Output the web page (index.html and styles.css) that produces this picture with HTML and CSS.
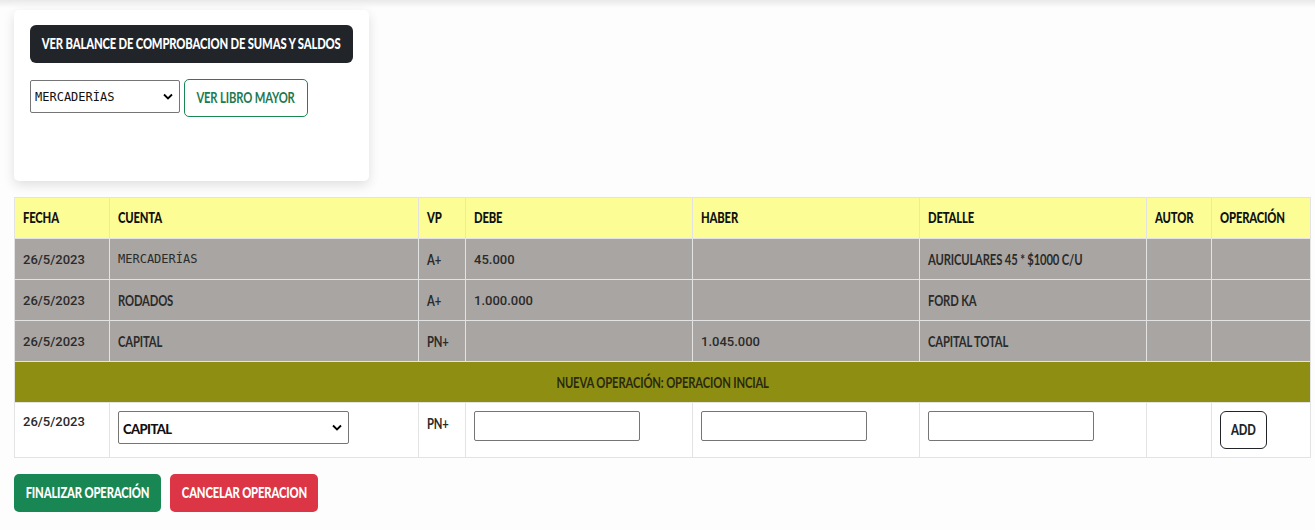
FILE: index.html
```html
<!DOCTYPE html>
<html lang="es">
<head>
<meta charset="utf-8">
<title>Libro Diario</title>
<link rel="stylesheet" href="styles.css">
</head>
<body>
<div class="topshade"></div>
<main class="page">
  <section class="card">
    <button class="btn btn-dark"><span class="cn cc">Ver balance de comprobacion de sumas y saldos</span></button>
    <div class="mayor-row">
      <select class="sel sel-mayor">
        <option>Mercaderías</option>
      </select>
      <button class="btn btn-outline-green"><span class="cn cc">Ver libro mayor</span></button>
    </div>
  </section>

  <table class="diario">
    <colgroup>
      <col style="width:95px"><col style="width:309px"><col style="width:47px"><col style="width:227px"><col style="width:227px"><col style="width:227px"><col style="width:65px"><col style="width:99px">
    </colgroup>
    <thead>
      <tr>
        <th><span class="cn">Fecha</span></th>
        <th><span class="cn">Cuenta</span></th>
        <th><span class="cn">VP</span></th>
        <th><span class="cn">Debe</span></th>
        <th><span class="cn">Haber</span></th>
        <th><span class="cn">Detalle</span></th>
        <th><span class="cn">Autor</span></th>
        <th><span class="cn">Operación</span></th>
      </tr>
    </thead>
    <tbody>
      <tr class="row-gray">
        <td class="num">26/5/2023</td>
        <td class="mono">Mercaderías</td>
        <td><span class="cn">A+</span></td>
        <td class="num">45.000</td>
        <td></td>
        <td><span class="cn">Auriculares 45 * $1000 c/u</span></td>
        <td></td><td></td>
      </tr>
      <tr class="row-gray">
        <td class="num">26/5/2023</td>
        <td><span class="cn">Rodados</span></td>
        <td><span class="cn">A+</span></td>
        <td class="num">1.000.000</td>
        <td></td>
        <td><span class="cn">Ford KA</span></td>
        <td></td><td></td>
      </tr>
      <tr class="row-gray">
        <td class="num">26/5/2023</td>
        <td><span class="cn">Capital</span></td>
        <td><span class="cn">PN+</span></td>
        <td></td>
        <td class="num">1.045.000</td>
        <td><span class="cn">Capital total</span></td>
        <td></td><td></td>
      </tr>
      <tr class="row-olive">
        <td colspan="8"><span class="cn cc">Nueva operación: operacion incial</span></td>
      </tr>
      <tr class="row-new">
        <td class="num">26/5/2023</td>
        <td><select class="sel sel-cuenta"><option>Capital</option></select></td>
        <td><span class="cn">PN+</span></td>
        <td><input class="inp" type="text"></td>
        <td><input class="inp" type="text"></td>
        <td><input class="inp" type="text"></td>
        <td></td>
        <td><button class="btn btn-add"><span class="cn cc">Add</span></button></td>
      </tr>
    </tbody>
  </table>

  <div class="actions">
    <button class="btn btn-green"><span class="cn cc">Finalizar operación</span></button>
    <button class="btn btn-red"><span class="cn cc">Cancelar operacion</span></button>
  </div>
</main>
</body>
</html>
```

FILE: styles.css
```css
* { box-sizing: border-box; }

html, body {
  margin: 0;
  padding: 0;
  background: #fdfdfd;
}

body {
  font-family: Lato, "Liberation Sans", sans-serif;
  font-size: 15px;
  font-weight: bold;
  color: #2a2a2a;
  text-transform: uppercase;
}

/* condensed display lettering */
.cn {
  display: inline-block;
  transform: scaleX(0.75);
  transform-origin: left center;
  letter-spacing: -0.2px;
  white-space: nowrap;
  line-height: 1;
}

.cc {
  transform-origin: center center;
}

.topshade {
  height: 8px;
  background: linear-gradient(#e9e9e9, #fdfdfd);
  margin-bottom: -8px;
}

.page {
  padding: 10px 5px 0 14px;
}

.card {
  width: 355px;
  height: 171px;
  background: #fff;
  border-radius: 5px;
  box-shadow: 0 4px 12px rgba(0, 0, 0, 0.12);
  padding: 15px 16px;
}

.btn {
  display: inline-flex;
  align-items: center;
  justify-content: center;
  font-family: Lato, "Liberation Sans", sans-serif;
  text-transform: uppercase;
  font-weight: 900;
  font-size: 15px;
  border-radius: 5px;
  border: 1px solid transparent;
  cursor: pointer;
  height: 38px;
  padding: 0 0 1px;
  white-space: nowrap;
  overflow: visible;
}

.btn-dark {
  background: #212529;
  color: #fff;
  width: 323px;
  border-radius: 6px;
}

.mayor-row {
  display: flex;
  align-items: flex-start;
  gap: 4px;
  margin-top: 16px;
}

.sel {
  font-family: "DejaVu Sans Mono", "Liberation Mono", monospace;
  text-transform: uppercase;
  font-size: 12px;
  font-weight: normal;
  color: #111;
  background: #fff;
  border: 1px solid #767676;
  border-radius: 2px;
  height: 33px;
  padding: 0 4px;
  appearance: none;
  background-image: url("data:image/svg+xml;utf8,<svg xmlns='http://www.w3.org/2000/svg' width='10' height='7' viewBox='0 0 10 7'><path d='M1 1.5 L5 5.5 L9 1.5' fill='none' stroke='black' stroke-width='1.8'/></svg>");
  background-repeat: no-repeat;
  background-position: right 6px center;
}

.sel-mayor {
  width: 150px;
  margin-top: 1px;
}

.btn-outline-green {
  background: #fff;
  color: #1d7a4f;
  border-color: #198754;
  width: 124px;
  font-weight: bold;
}

.diario {
  margin-top: 16px;
  width: 1296px;
  border-collapse: collapse;
  table-layout: fixed;
}

.diario th,
.diario td {
  border: 1px solid #e3e3e3;
  padding: 8px;
  text-align: left;
  height: 41px;
  white-space: nowrap;
  overflow: hidden;
}

.diario th {
  background: #fdfd96;
  font-weight: 900;
  color: #111;
  padding-bottom: 10px;
}

.row-gray td {
  background: #a9a5a2;
  color: #2b2b2b;
}

.num {
  font-family: Roboto, "Liberation Sans", sans-serif;
  font-weight: 500;
  font-size: 13px;
}

.mono {
  font-family: "DejaVu Sans Mono", "Liberation Mono", monospace;
  font-weight: normal;
  font-size: 12px;
}

.row-olive td {
  background: #8e8e13;
  text-align: center;
  color: #2a2a10;
}

.row-new td {
  background: #fff;
  vertical-align: top;
  height: 55px;
  padding-top: 11px;
}

.row-new td:nth-child(2),
.row-new td:nth-child(4),
.row-new td:nth-child(5),
.row-new td:nth-child(6),
.row-new td:nth-child(8) {
  padding-top: 8px;
}

.sel-cuenta {
  width: 231px;
  font-family: Lato, "Liberation Sans", sans-serif;
  font-weight: 900;
  font-size: 13px;
  letter-spacing: -0.6px;
  padding-top: 3px;
}

.inp {
  width: 166px;
  height: 30px;
  border: 1px solid #767676;
  border-radius: 2px;
  background: #fff;
}

.btn-add {
  background: #fff;
  color: #212529;
  border-color: #212529;
  width: 47px;
  border-radius: 6px;
}

.actions {
  display: flex;
  gap: 9px;
  margin-top: 16px;
}

.btn-green {
  background: #198754;
  color: #fff;
  width: 147px;
}

.btn-red {
  background: #dc3545;
  color: #fff;
  width: 148px;
}
```
